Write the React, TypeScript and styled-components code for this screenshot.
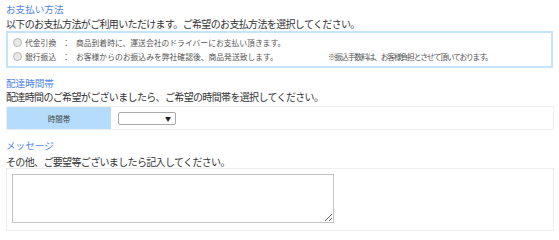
import React from "react";
import styled, { createGlobalStyle } from "styled-components";

const Global = createGlobalStyle`
  html, body { margin: 0; padding: 0; background: #fff; }
  body { font-family: "Noto Sans CJK JP", "Noto Sans", sans-serif; color: #333; }
`;

const Page = styled.div`
  padding: 3px 5px 0 6px;
  display: flex;
  flex-direction: column;
`;

const Heading = styled.div<{ $top?: number }>`
  color: #4f86e6;
  font-size: 9.6px;
  line-height: 12px;
  margin-top: ${(p) => p.$top ?? 0}px;
`;

const Lead = styled.div<{ $top?: number }>`
  font-size: 10px;
  letter-spacing: -0.65px;
  line-height: 12px;
  margin-top: ${(p) => p.$top ?? 0}px;
  color: #333;
  white-space: nowrap;
`;

const PayBox = styled.div`
  margin-top: 1px;
  width: 547px;
  box-sizing: border-box;
  border: 2px solid #c4e4fb;
  height: 37px;
  padding: 3px 0 0 5px;
  display: flex;
  flex-direction: column;
  gap: 1px;
`;

const RadioRow = styled.label`
  display: flex;
  align-items: center;
  height: 13px;
  font-size: 7.8px;
  color: #555;
  white-space: nowrap;
`;

const Radio = styled.span`
  width: 7px;
  height: 7px;
  border-radius: 50%;
  border: 1px solid #b5b5b5;
  background: #e8e8e8;
  margin-right: 3px;
  flex: none;
`;

const Sep = styled.span`
  margin: 0 6px;
`;

const Note = styled.span`
  margin-left: 50px;
  letter-spacing: -1.2px;
`;

const TimeRow = styled.div`
  margin-top: 3px;
  display: flex;
  height: 24px;
  border: 1px solid #eee;
  width: 548px;
  box-sizing: border-box;
`;

const LabelCell = styled.div`
  width: 104px;
  background: #b5dcfa;
  display: flex;
  align-items: center;
  justify-content: center;
  font-size: 7.5px;
  color: #444;
  border-right: 1px solid #fff;
`;

const ValueCell = styled.div`
  flex: 1;
  display: flex;
  align-items: center;
  padding-left: 6px;
`;

const SelectBox = styled.div`
  width: 58px;
  height: 13px;
  box-sizing: border-box;
  border: 1px solid #a9a9a9;
  border-radius: 2px;
  display: flex;
  align-items: center;
  justify-content: flex-end;
  padding-right: 4px;
  font-size: 6px;
  color: #222;
  background: #fff;
`;

const MessageBox = styled.div`
  width: 548px;
  height: 63px;
  box-sizing: border-box;
  border: 1px solid #eee;
  padding: 5px 0 0 5px;
`;

const Area = styled.textarea`
  display: block;
  width: 322px;
  height: 49px;
  box-sizing: border-box;
  margin: 0;
  border: 1px solid #c4c4c4;
  padding: 2px;
  font-family: inherit;
  font-size: 9px;
  outline: none;
`;

export default function App() {
  return (
    <>
      <Global />
      <Page>
        <Heading>お支払い方法</Heading>
        <Lead $top={3}>以下のお支払方法がご利用いただけます。ご希望のお支払方法を選択してください。</Lead>
        <PayBox>
          <RadioRow>
            <Radio />
            代金引換<Sep>：</Sep>商品到着時に、運送会社のドライバーにお支払い頂きます。
          </RadioRow>
          <RadioRow>
            <Radio />
            銀行振込<Sep>：</Sep>お客様からのお振込みを弊社確認後、商品発送致します。
            <Note>※振込手数料は、お客様負担とさせて頂いております。</Note>
          </RadioRow>
        </PayBox>
        <Heading $top={8.5}>配達時間帯</Heading>
        <Lead $top={2.5}>配達時間のご希望がございましたら、ご希望の時間帯を選択してください。</Lead>
        <TimeRow>
          <LabelCell>時間帯</LabelCell>
          <ValueCell>
            <SelectBox>▼</SelectBox>
          </ValueCell>
        </TimeRow>
        <Heading $top={9}>メッセージ</Heading>
        <Lead $top={5}>その他、ご要望等ございましたら記入してください。</Lead>
        <MessageBox>
          <Area />
        </MessageBox>
      </Page>
    </>
  );
}
